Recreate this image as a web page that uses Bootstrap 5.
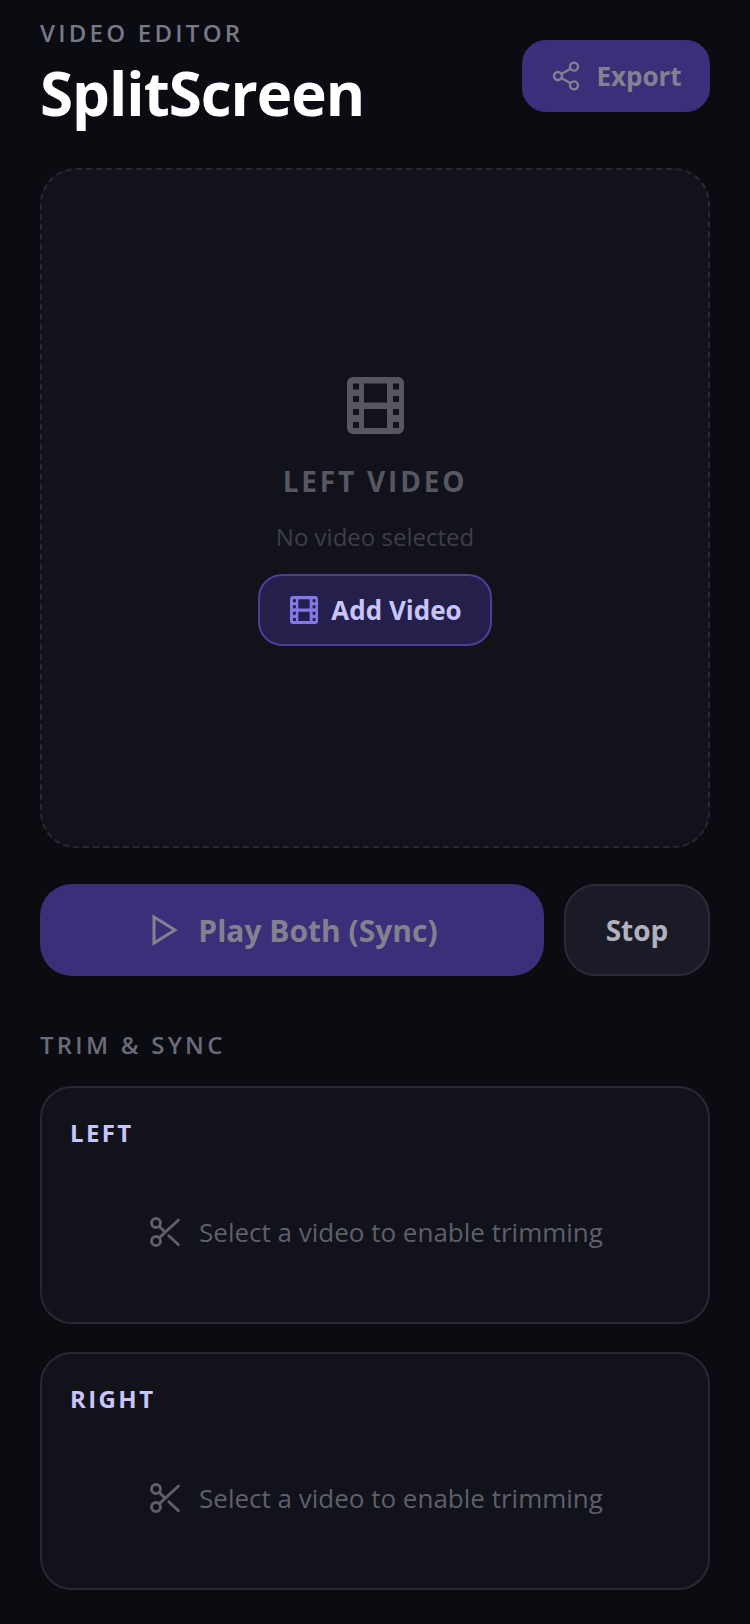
<!DOCTYPE html>
<html lang="en">
<head>
    <meta charset="UTF-8">
    <meta name="viewport" content="width=device-width, initial-scale=1.0">
    <title>SplitScreen</title>
    <link href="https://cdn.jsdelivr.net/npm/bootstrap@5.3.0/dist/css/bootstrap.min.css" rel="stylesheet">
    <style>
        body { background: #0b0c12; font-family: "Open Sans", sans-serif; }
        .app-page { padding: 16px 40px 0; height: 1624px; overflow: hidden; }
        .app-head { height: 152px; }
        .eyebrow { font-size: 24px; line-height: 34px; font-weight: 600; letter-spacing: 3.24px; color: #787887; }
        .app-title { font-size: 60px; line-height: 76px; font-weight: 700; color: #fff; margin: 5px 0 0; letter-spacing: -1px; }
        .btn-export { width: 188px; height: 72px; margin-top: 24px; border-radius: 24px; background: #3b2f7a; color: #838190; font-size: 26px; font-weight: 700; border: 0; gap: 14px; padding: 0; }
        .drop-zone { height: 680px; border: 2px dashed #272832; border-radius: 36px; background: #11121a; padding-top: 7px; }
        .drop-title { font-size: 28px; line-height: 40px; font-weight: 700; letter-spacing: 2.8px; color: #575762; margin-top: 27px; }
        .drop-sub { font-size: 24px; line-height: 36px; color: #3e3e4a; margin-top: 18px; }
        .btn-add { width: 234px; height: 72px; margin-top: 19px; border-radius: 24px; border: 2px solid #4d3f94; background: #241f4b; color: #c9c5fb; font-size: 26px; font-weight: 700; gap: 13px; padding: 0 0 0 2px; }
        .btn-add:hover { background: #241f4b; color: #c9c5fb; border-color: #4d3f94; }
        .action-row { margin-top: 36px; gap: 20px; }
        .btn-play { width: 504px; height: 92px; border-radius: 32px; border: 0; background: #3b2f7a; color: #838190; font-size: 30px; font-weight: 700; gap: 20px; padding: 0 0 0 6px; }
        .btn-stop { width: 146px; height: 92px; border-radius: 32px; border: 2px solid #2a2b36; background: #1a1b26; color: #b2b1be; font-size: 28px; font-weight: 700; padding: 0; }
        .section-label { font-size: 24px; line-height: 34px; font-weight: 600; letter-spacing: 3.24px; color: #6b6b79; margin-top: 52px; }
        .trim-panel { height: 238px; margin-top: 24px; border: 2px solid #272832; border-radius: 32px; background: #11121a; padding: 28px 28px 0; }
        .trim-panel + .trim-panel { margin-top: 28px; }
        .trim-name { font-size: 24px; line-height: 34px; font-weight: 700; letter-spacing: 2.4px; color: #c9c5fb; }
        .trim-empty { margin-top: 62px; gap: 16px; font-size: 26px; line-height: 40px; color: #5f5f6c; }
    </style>
</head>
<body>
<div class="app-page">
    <div class="app-head d-flex justify-content-between align-items-start">
        <div>
            <div class="eyebrow">VIDEO EDITOR</div>
            <h1 class="app-title">SplitScreen</h1>
        </div>
        <button class="btn btn-export d-flex align-items-center justify-content-center">
            <svg width="32" height="32" viewBox="0 0 24 24" fill="none" stroke="#838190" stroke-width="1.8" stroke-linecap="round" stroke-linejoin="round"><circle cx="18" cy="5" r="3"/><circle cx="6" cy="12" r="3"/><circle cx="18" cy="19" r="3"/><path d="M8.6 13.5l6.8 4M15.4 6.5l-6.8 4"/></svg>
            <span>Export</span>
        </button>
    </div>

    <div class="drop-zone d-flex flex-column align-items-center justify-content-center">
        <svg width="57" height="57" viewBox="0 0 57 57" fill="#575762" fill-rule="evenodd"><path d="M6 0h45a6 6 0 0 1 6 6v45a6 6 0 0 1-6 6H6a6 6 0 0 1-6-6V6a6 6 0 0 1 6-6zM17 6.5v19h23v-19zM17 32v19h23V32zM6 6.5v6h6v-6zM6 19v6h6v-6zM6 32v6h6v-6zM6 45v6h6v-6zM46 6.5v6h6v-6zM46 19v6h6v-6zM46 32v6h6v-6zM46 45v6h6v-6z"/></svg>
        <div class="drop-title">LEFT VIDEO</div>
        <div class="drop-sub">No video selected</div>
        <button class="btn btn-add d-flex align-items-center justify-content-center">
            <svg width="28" height="28" viewBox="0 0 57 57" fill="#8577e8" fill-rule="evenodd"><path d="M6 0h45a6 6 0 0 1 6 6v45a6 6 0 0 1-6 6H6a6 6 0 0 1-6-6V6a6 6 0 0 1 6-6zM17 6.5v19h23v-19zM17 32v19h23V32zM6 6.5v6h6v-6zM6 19v6h6v-6zM6 32v6h6v-6zM6 45v6h6v-6zM46 6.5v6h6v-6zM46 19v6h6v-6zM46 32v6h6v-6zM46 45v6h6v-6z"/></svg>
            <span>Add Video</span>
        </button>
    </div>

    <div class="action-row d-flex">
        <button class="btn btn-play d-flex align-items-center justify-content-center">
            <svg width="26" height="32" viewBox="0 0 26 32" fill="none" stroke="#838190" stroke-width="3"><path d="M2 3l21 13-21 13z"/></svg>
            <span>Play Both (Sync)</span>
        </button>
        <button class="btn btn-stop">Stop</button>
    </div>

    <div class="section-label">TRIM &amp; SYNC</div>

    <div class="trim-panel">
        <div class="trim-name">LEFT</div>
        <div class="trim-empty d-flex align-items-center justify-content-center">
            <svg width="36" height="36" viewBox="0 0 24 24" fill="none" stroke="#5f5f6c" stroke-width="1.9" stroke-linecap="round" stroke-linejoin="round"><circle cx="6" cy="6" r="3"/><circle cx="6" cy="18" r="3"/><path d="M21 4L8.1 15.9M14.5 14.5L21 20.5M8.1 8.1L12 12"/></svg>
            <span>Select a video to enable trimming</span>
        </div>
    </div>
    <div class="trim-panel">
        <div class="trim-name">RIGHT</div>
        <div class="trim-empty d-flex align-items-center justify-content-center">
            <svg width="36" height="36" viewBox="0 0 24 24" fill="none" stroke="#5f5f6c" stroke-width="1.9" stroke-linecap="round" stroke-linejoin="round"><circle cx="6" cy="6" r="3"/><circle cx="6" cy="18" r="3"/><path d="M21 4L8.1 15.9M14.5 14.5L21 20.5M8.1 8.1L12 12"/></svg>
            <span>Select a video to enable trimming</span>
        </div>
    </div>
</div>
<script src="https://cdn.jsdelivr.net/npm/bootstrap@5.3.0/dist/js/bootstrap.bundle.min.js"></script>
</body>
</html>
